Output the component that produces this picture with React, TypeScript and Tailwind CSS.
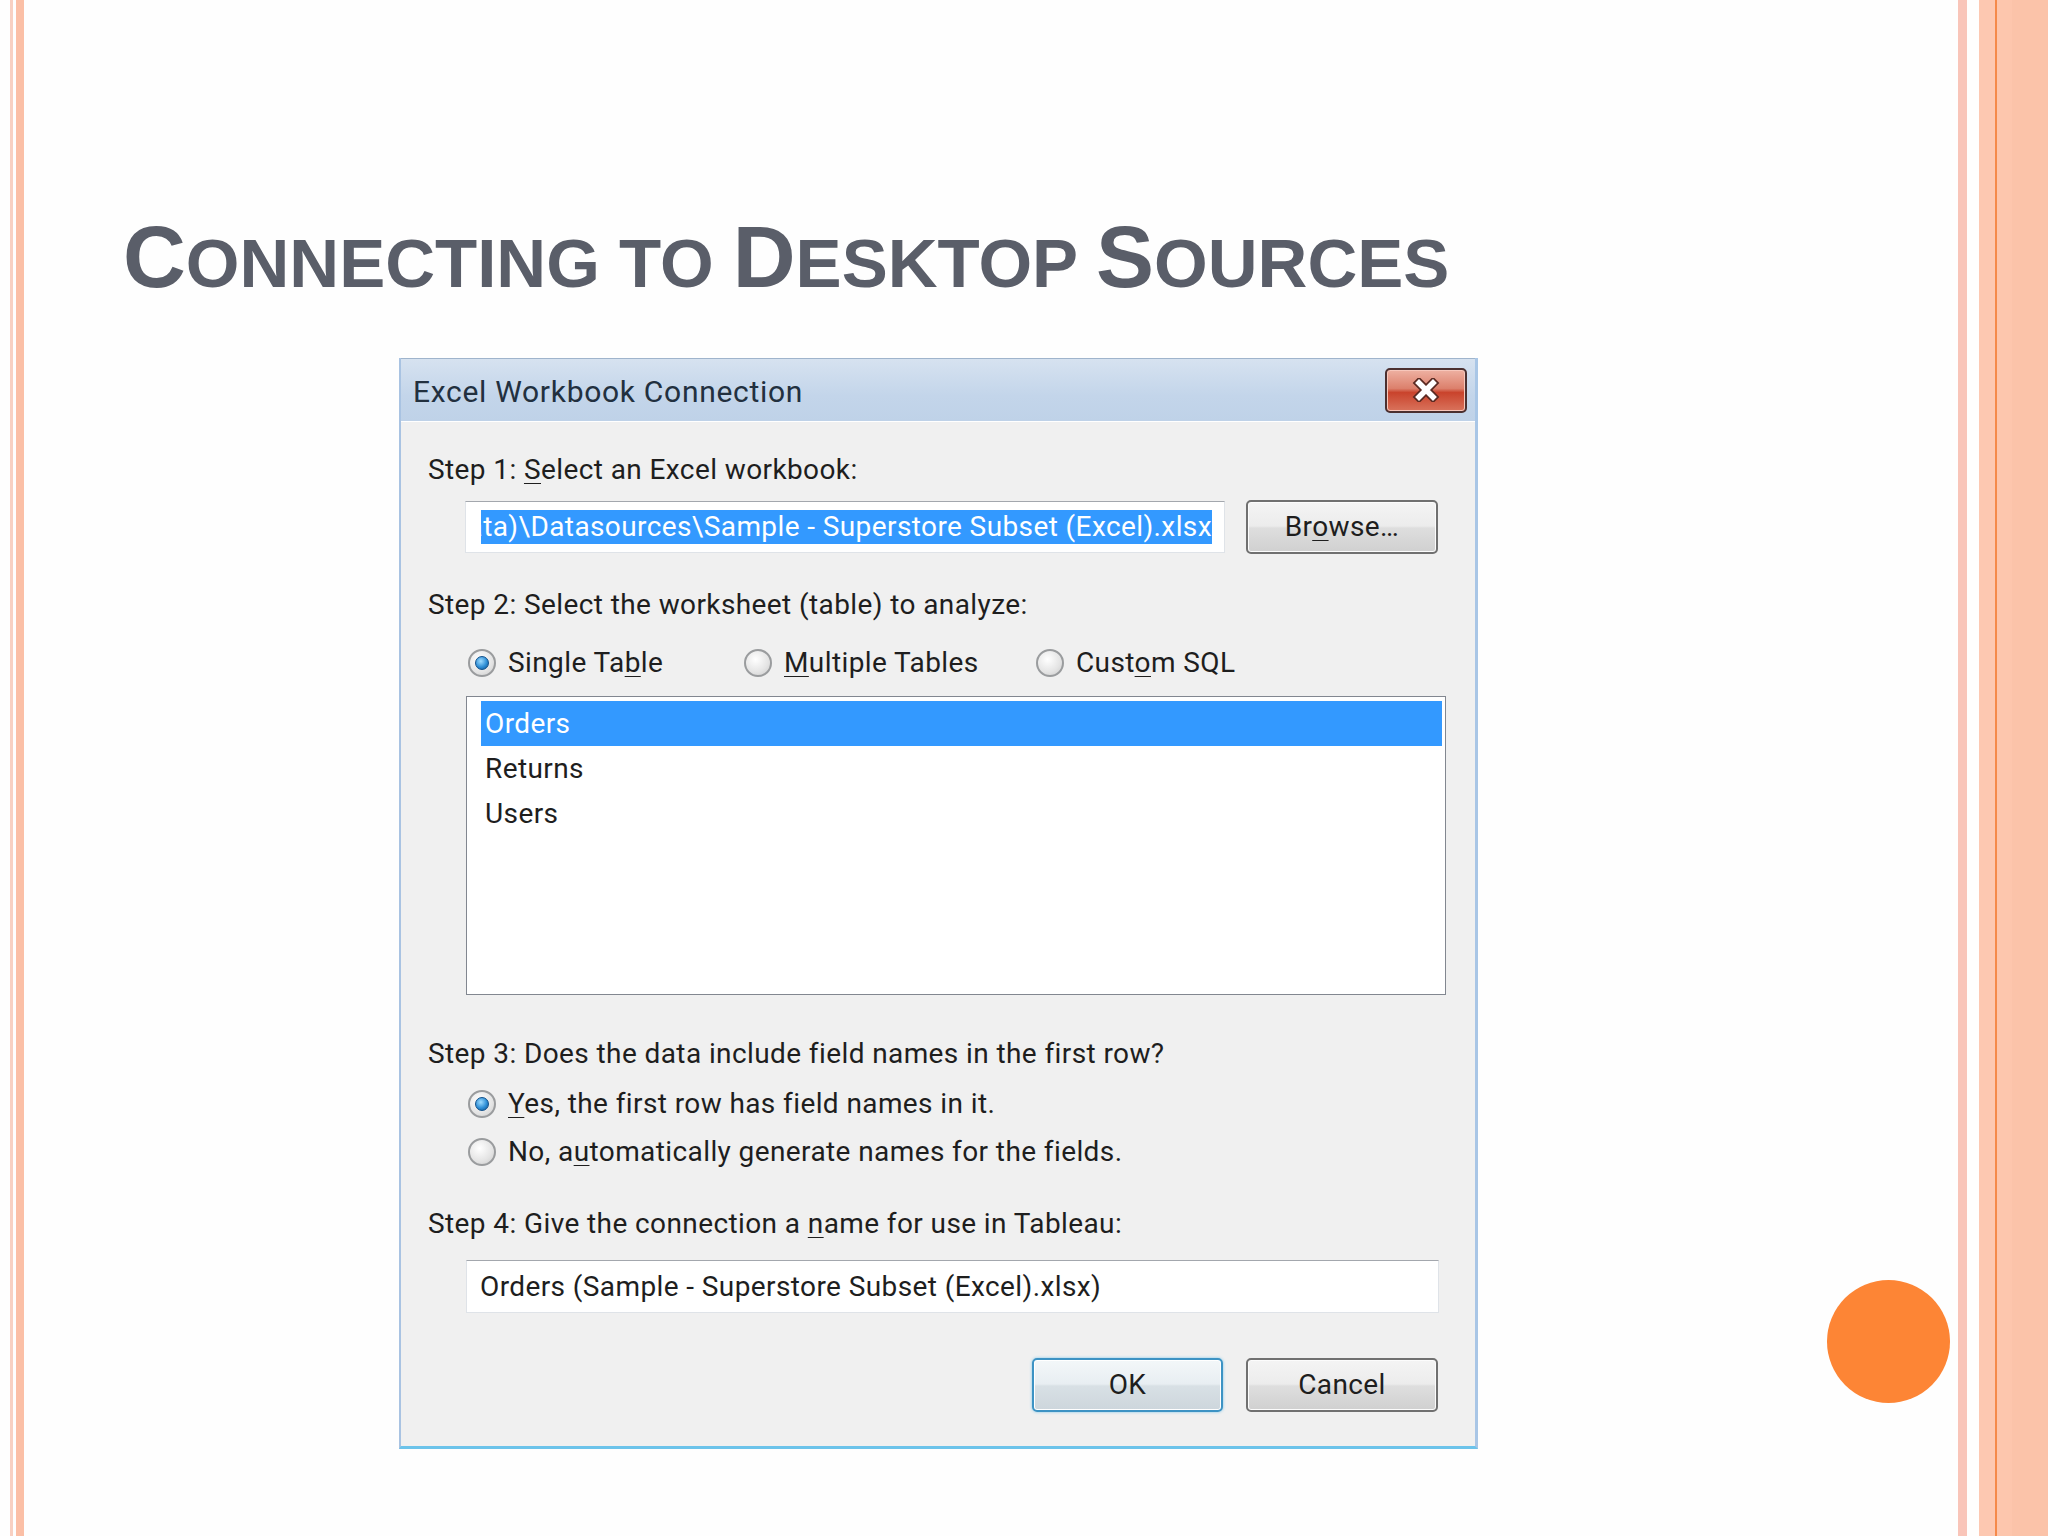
import React from "react";

const UI = "font-['Roboto','Noto_Sans',sans-serif]";

function U({ children }: { children: React.ReactNode }) {
  return <span className="underline decoration-1 underline-offset-[4px]">{children}</span>;
}

function Radio({ checked }: { checked?: boolean }) {
  return (
    <span className="flex h-[28px] w-[28px] shrink-0 items-center justify-center rounded-full border-2 border-[#9a9c9e] bg-[radial-gradient(circle_at_40%_35%,#ffffff,#e4e4e4_60%,#c9c9c9)]">
      {checked && (
        <span className="h-[14px] w-[14px] rounded-full border border-[#0f4f8a] bg-[radial-gradient(circle_at_40%_35%,#9fdcff,#2f8fd6_55%,#0d4f8c)]" />
      )}
    </span>
  );
}

function Label({ children, className = "" }: { children: React.ReactNode; className?: string }) {
  return <div className={`flex h-[40px] items-center whitespace-pre ${className}`}>{children}</div>;
}

function Btn({ children, primary }: { children: React.ReactNode; primary?: boolean }) {
  return (
    <div
      className={
        primary
          ? "flex h-[54px] w-[191px] items-center justify-center rounded-[5px] border-2 border-[#3d93c4] bg-[linear-gradient(#f3f7f9_0%,#e8eef2_48%,#d8e0e5_52%,#cdd6dc_100%)] shadow-[0_0_3px_#7cc6ea,inset_0_0_0_1px_#ffffff]"
          : "flex h-[54px] w-[192px] items-center justify-center rounded-[5px] border-2 border-[#707070] bg-[linear-gradient(#f4f4f4_0%,#ececec_48%,#dedede_52%,#d0d0d0_100%)] shadow-[inset_0_0_0_1px_#fcfcfc]"
      }
    >
      {children}
    </div>
  );
}

export default function App() {
  return (
    <div className="flex h-[1536px] w-[2048px] overflow-hidden bg-[#fefefe]">
      {/* left stripes */}
      <div className="w-[10px]" />
      <div className="w-[3px] bg-[#f8d0c2]" />
      <div className="w-[3px]" />
      <div className="w-[8px] bg-[#fbbfa6]" />

      {/* main */}
      <div className="relative flex flex-1 flex-col">
        <div className="ml-[99px] mt-[213px] h-[88px] whitespace-nowrap font-['Liberation_Sans',Arial,sans-serif] text-[87px] font-bold leading-none text-[#5a5e69]">
          C<span className="text-[69px]">ONNECTING TO </span>D<span className="text-[69px]">ESKTOP </span>S<span className="text-[69px]">OURCES</span>
        </div>

        {/* dialog */}
        <div className={`ml-[375px] mt-[57px] flex h-[1091px] w-[1079px] flex-col border-b-[3px] border-l-2 border-r-[3px] border-b-[#6cc3ea] border-l-[#a9c3e2] border-r-[#a9c6e6] ${UI} text-[28px] tracking-[0.4px] text-[#1e1e1e]`}>
          {/* title bar */}
          <div className="flex h-[63px] shrink-0 items-center justify-between border-t border-t-[#9fb4cc] bg-[linear-gradient(#d6e2f0,#c3d5ea_60%,#bfd2e8)] pl-[12px] pr-[8px]">
            <span className="pt-[2px] text-[30px] tracking-[0.7px] text-[#22303f]">Excel Workbook Connection</span>
            <div className="flex h-[45px] w-[82px] items-center justify-center rounded-[5px] border-2 border-[#4b3030] bg-[linear-gradient(#eeb1a2_0%,#dc806c_45%,#c9432c_55%,#d9735c_100%)] shadow-[inset_0_0_0_1px_#f7c7bb]">
              <svg width="30" height="24" viewBox="0 0 30 24">
                <path d="M8 5 L22 19 M22 5 L8 19" stroke="#5a2a22" strokeWidth="9" strokeLinecap="square" />
                <path d="M8 5 L22 19 M22 5 L8 19" stroke="#ffffff" strokeWidth="5.5" strokeLinecap="square" />
              </svg>
            </div>
          </div>

          {/* body */}
          <div className="flex flex-1 flex-col bg-[#f0f0f0] pl-[27px] shadow-[inset_0_1px_0_#ffffff]">
            <Label className="mt-[29px]">
              <span>Step 1: </span>
              <U>S</U>
              <span>elect an Excel workbook:</span>
            </Label>

            <div className="ml-[37px] mt-[9px] flex h-[56px] items-center gap-[21px]">
              <div className="flex h-[52px] w-[760px] items-center border border-[#dfe3e8] border-t-[#a3a7ad] bg-white pl-[15px] pr-[12px]">
                <div className="flex h-[34px] flex-1 justify-end overflow-hidden bg-[#3399ff]">
                  <span className="whitespace-nowrap leading-[34px] text-white">
                    {"My Tableau Repository (Beta Data)\\Datasources\\Sample - Superstore Subset (Excel).xlsx"}
                  </span>
                </div>
              </div>
              <Btn>
                <span>
                  Br<U>o</U>wse…
                </span>
              </Btn>
            </div>

            <Label className="mt-[30px]">Step 2: Select the worksheet (table) to analyze:</Label>

            <div className="ml-[40px] mt-[18px] flex h-[40px] items-center">
              <div className="flex w-[276px] items-center gap-[12px]">
                <Radio checked />
                <span>
                  Single Ta<U>b</U>le
                </span>
              </div>
              <div className="flex w-[292px] items-center gap-[12px]">
                <Radio />
                <span>
                  <U>M</U>ultiple Tables
                </span>
              </div>
              <div className="flex items-center gap-[12px]">
                <Radio />
                <span>
                  Cust<U>o</U>m SQL
                </span>
              </div>
            </div>

            <div className="ml-[38px] mt-[13px] flex h-[299px] w-[980px] flex-col border border-[#828790] bg-white pl-[14px] pr-[3px] pt-[4px]">
              <div className="flex h-[45px] items-center bg-[#3399ff] pl-[4px] text-white">Orders</div>
              <div className="flex h-[45px] items-center pl-[4px]">Returns</div>
              <div className="flex h-[45px] items-center pl-[4px]">Users</div>
            </div>

            <Label className="mt-[39px]">Step 3: Does the data include field names in the first row?</Label>
            <div className="ml-[40px] mt-[10px] flex h-[40px] items-center gap-[12px]">
              <Radio checked />
              <span>
                <U>Y</U>es, the first row has field names in it.
              </span>
            </div>
            <div className="ml-[40px] mt-[8px] flex h-[40px] items-center gap-[12px]">
              <Radio />
              <span>
                No, a<U>u</U>tomatically generate names for the fields.
              </span>
            </div>

            <Label className="mt-[32px]">
              <span>Step 4: Give the connection a </span>
              <U>n</U>
              <span>ame for use in Tableau:</span>
            </Label>

            <div className="ml-[38px] mt-[16px] flex h-[53px] w-[973px] items-center border border-[#dfe3e8] border-t-[#a3a7ad] bg-white pl-[13px]">
              Orders (Sample - Superstore Subset (Excel).xlsx)
            </div>

            <div className="mt-[45px] flex justify-end gap-[23px] pr-[37px]">
              <Btn primary>OK</Btn>
              <Btn>Cancel</Btn>
            </div>
          </div>
        </div>

        {/* decorative circle */}
        <div className="absolute left-[1803px] top-[1280px] h-[123px] w-[123px] rounded-full bg-[#fd8535]" />
      </div>

      {/* right stripes */}
      <div className="w-[9px] bg-[#f9c5b9]" />
      <div className="w-[12px] bg-[#fffefd]" />
      <div className="w-[16px] bg-[#fdc8b1]" />
      <div className="w-[2px] bg-[#f58a4a]" />
      <div className="w-[15px] bg-[#fdc6ad]" />
      <div className="w-[36px] bg-[#fbc3a9]" />
    </div>
  );
}
